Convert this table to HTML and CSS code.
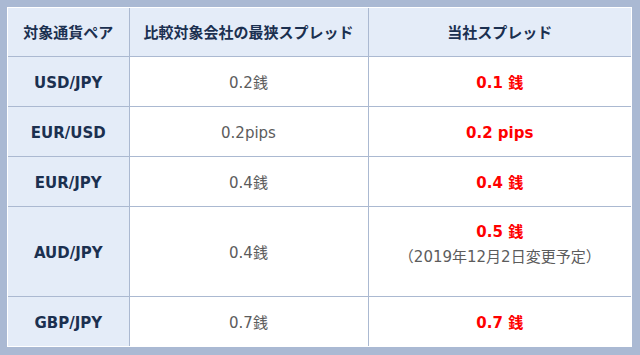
FILE: index.html
```html
<!DOCTYPE html>
<html lang="ja">
<head>
<meta charset="utf-8">
<link rel="stylesheet" href="styles.css">
</head>
<body>
<div class="frame">
<table class="spread">
  <colgroup>
    <col class="c1"><col class="c2"><col class="c3">
  </colgroup>
  <thead>
    <tr>
      <th>対象通貨ペア</th>
      <th>比較対象会社の最狭スプレッド</th>
      <th>当社スプレッド</th>
    </tr>
  </thead>
  <tbody>
    <tr>
      <th>USD/JPY</th>
      <td class="other">0.2銭</td>
      <td class="ours">0.1 銭</td>
    </tr>
    <tr>
      <th>EUR/USD</th>
      <td class="other">0.2pips</td>
      <td class="ours">0.2 pips</td>
    </tr>
    <tr>
      <th>EUR/JPY</th>
      <td class="other">0.4銭</td>
      <td class="ours">0.4 銭</td>
    </tr>
    <tr class="tall">
      <th>AUD/JPY</th>
      <td class="other">0.4銭</td>
      <td class="ours">0.5 銭<span class="note">（2019年12月2日変更予定）</span></td>
    </tr>
    <tr>
      <th>GBP/JPY</th>
      <td class="other">0.7銭</td>
      <td class="ours">0.7 銭</td>
    </tr>
  </tbody>
</table>
</div>
</body>
</html>
```

FILE: styles.css
```css
html, body {
  margin: 0;
  padding: 0;
}
body {
  background: #aab9d3;
  width: 640px;
  height: 355px;
  overflow: hidden;
  font-family: "DejaVu Sans", "Noto Sans CJK JP", sans-serif;
}
.frame {
  margin: 7px 8px 7px 7px;
  background: #ffffff;
  padding: 1px;
}
.spread {
  width: 100%;
  border-collapse: collapse;
  table-layout: fixed;
}
.c1 { width: 121px; }
.c2 { width: 239px; }
.c3 { width: auto; }
.spread th,
.spread td {
  border: 1px solid #abb9d1;
  text-align: center;
  vertical-align: middle;
  padding: 4px 0 0;
  height: 45px;
  font-size: 15px;
  line-height: 25px;
}
.spread tr > :first-child { border-left: none; }
.spread tr > :last-child { border-right: none; }
.spread thead tr > * { border-top: none; }
.spread tbody tr:last-child > * { border-bottom: none; height: 45px; }
.spread th {
  background: #e4ecf8;
  color: #1b3050;
  font-weight: bold;
}
.spread thead th {
  height: 44px;
  padding-top: 2px;
  height: 46px;
}
.other {
  color: #5c5c5c;
  background: #ffffff;
}
.ours {
  color: #ff0000;
  font-weight: bold;
  background: #ffffff;
}
.tall > * {
  height: 85px !important;
}
.note {
  display: block;
  color: #5c5c5c;
  font-weight: normal;
  padding-bottom: 18px;
}
```
